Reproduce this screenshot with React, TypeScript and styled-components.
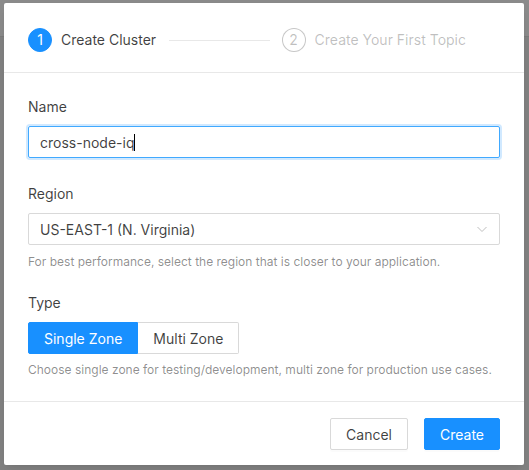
import React from "react";
import styled, { createGlobalStyle } from "styled-components";

const Global = createGlobalStyle`
  html, body { margin: 0; padding: 0; }
  body {
    font-family: Inter, "Noto Sans", "Liberation Sans", sans-serif;
    font-size: 14px;
    color: rgba(0,0,0,0.78);
    background: #838383;
    width: 529px;
    height: 470px;
    overflow: hidden;
  }
  * { box-sizing: border-box; }
`;

const Page = styled.div`
  width: 529px;
  height: 470px;
  background: #838383;
  position: relative;
  overflow: hidden;
`;

const PageHeader = styled.div`
  height: 37px;
  background: #8c8c8c;
  border-bottom: 1px solid #7c7c7c;
`;

const Modal = styled.div`
  position: absolute;
  left: 4px;
  top: 3px;
  width: 520px;
  height: 462px;
  background: #fff;
  border-radius: 2px;
  box-shadow: 0 3px 6px -4px rgba(0,0,0,0.12), 0 6px 16px 0 rgba(0,0,0,0.08);
  display: flex;
  flex-direction: column;
`;

const Header = styled.div`
  padding: 25px 24px 20px;
  border-bottom: 1px solid #e8e8e8;
`;

const Steps = styled.div`
  display: flex;
  align-items: center;
  height: 24px;
  padding-right: 34px;
`;

const Step = styled.div`
  display: flex;
  align-items: center;
  gap: 9px;
  flex: none;
`;

const StepIcon = styled.div<{ $active?: boolean }>`
  width: 24px;
  height: 24px;
  border-radius: 50%;
  display: flex;
  align-items: center;
  justify-content: center;
  font-size: 14px;
  line-height: 1;
  background: ${(p) => (p.$active ? "#1890ff" : "#fff")};
  color: ${(p) => (p.$active ? "#fff" : "rgba(0,0,0,0.25)")};
  border: 1px solid ${(p) => (p.$active ? "#1890ff" : "rgba(0,0,0,0.22)")};
`;

const StepTitle = styled.span<{ $active?: boolean }>`
  font-size: 14px;
  line-height: 22px;
  color: ${(p) => (p.$active ? "rgba(0,0,0,0.75)" : "rgba(0,0,0,0.25)")};
`;

const StepLine = styled.div`
  flex: 1;
  height: 1px;
  background: #e8e8e8;
  margin: 0 12px 0 13px;
`;

const Body = styled.div`
  padding: 23px 24px 21px;
  display: flex;
  flex-direction: column;
`;

const FormItem = styled.div<{ $mb: number }>`
  display: flex;
  flex-direction: column;
  margin-bottom: ${(p) => p.$mb}px;
`;

const Label = styled.label`
  font-size: 14px;
  line-height: 22px;
  color: rgba(0,0,0,0.75);
  margin-bottom: 8px;
`;

const InputBox = styled.div`
  height: 32px;
  border: 1px solid #40a9ff;
  border-radius: 2px;
  box-shadow: 0 0 0 2px rgba(24,144,255,0.2);
  padding: 0 11px;
  display: flex;
  align-items: center;
  font-size: 14px;
  color: rgba(0,0,0,0.75);
`;

const Caret = styled.span`
  display: inline-block;
  width: 1px;
  height: 17px;
  background: #000;
`;

const SelectBox = styled.div`
  height: 32px;
  border: 1px solid #d9d9d9;
  border-radius: 2px;
  padding: 0 11px;
  display: flex;
  align-items: center;
  justify-content: space-between;
  font-size: 14px;
  color: rgba(0,0,0,0.75);
`;

const Help = styled.div<{ $mt: number }>`
  font-size: 12px;
  line-height: 20px;
  color: rgba(0,0,0,0.45);
  margin-top: ${(p) => p.$mt}px;
`;

const RadioGroup = styled.div`
  display: flex;
`;

const RadioButton = styled.div<{ $checked?: boolean }>`
  height: 32px;
  padding: 0 15px;
  display: flex;
  align-items: center;
  font-size: 14px;
  border: 1px solid ${(p) => (p.$checked ? "#1890ff" : "#d9d9d9")};
  background: ${(p) => (p.$checked ? "#1890ff" : "#fff")};
  color: ${(p) => (p.$checked ? "#fff" : "rgba(0,0,0,0.75)")};
  &:first-child { border-radius: 2px 0 0 2px; }
  &:last-child { border-radius: 0 2px 2px 0; border-left: none; }
`;

const Footer = styled.div`
  border-top: 1px solid #e8e8e8;
  padding: 16px 24px 15px;
  display: flex;
  justify-content: flex-end;
  gap: 16px;
`;

const Button = styled.button<{ $primary?: boolean }>`
  height: 32px;
  padding: 0 15px;
  font-family: inherit;
  font-size: 14px;
  border-radius: 2px;
  border: 1px solid ${(p) => (p.$primary ? "#1890ff" : "#d9d9d9")};
  background: ${(p) => (p.$primary ? "#1890ff" : "#fff")};
  color: ${(p) => (p.$primary ? "#fff" : "rgba(0,0,0,0.75)")};
  box-shadow: 0 2px 0 rgba(0,0,0,0.015);
`;

const Chevron = () => (
  <svg width="12" height="12" viewBox="0 0 12 12" fill="none">
    <path d="M1.5 4 L6 8.5 L10.5 4" stroke="#bfbfbf" strokeWidth="1" />
  </svg>
);

export default function App() {
  return (
    <>
      <Global />
      <Page>
        <PageHeader />
        <Modal>
          <Header>
            <Steps>
              <Step>
                <StepIcon $active>1</StepIcon>
                <StepTitle $active>Create Cluster</StepTitle>
              </Step>
              <StepLine />
              <Step>
                <StepIcon>2</StepIcon>
                <StepTitle>Create Your First Topic</StepTitle>
              </Step>
            </Steps>
          </Header>
          <Body>
            <FormItem $mb={25}>
              <Label>Name</Label>
              <InputBox>
                cross-node-iq
                <Caret />
              </InputBox>
            </FormItem>
            <FormItem $mb={20}>
              <Label>Region</Label>
              <SelectBox>
                <span>US-EAST-1 (N. Virginia)</span>
                <Chevron />
              </SelectBox>
              <Help $mt={7}>
                For best performance, select the region that is closer to your application.
              </Help>
            </FormItem>
            <FormItem $mb={0}>
              <Label>Type</Label>
              <RadioGroup>
                <RadioButton $checked>Single Zone</RadioButton>
                <RadioButton>Multi Zone</RadioButton>
              </RadioGroup>
              <Help $mt={6}>
                Choose single zone for testing/development, multi zone for production use cases.
              </Help>
            </FormItem>
          </Body>
          <Footer>
            <Button>Cancel</Button>
            <Button $primary>Create</Button>
          </Footer>
        </Modal>
      </Page>
    </>
  );
}
